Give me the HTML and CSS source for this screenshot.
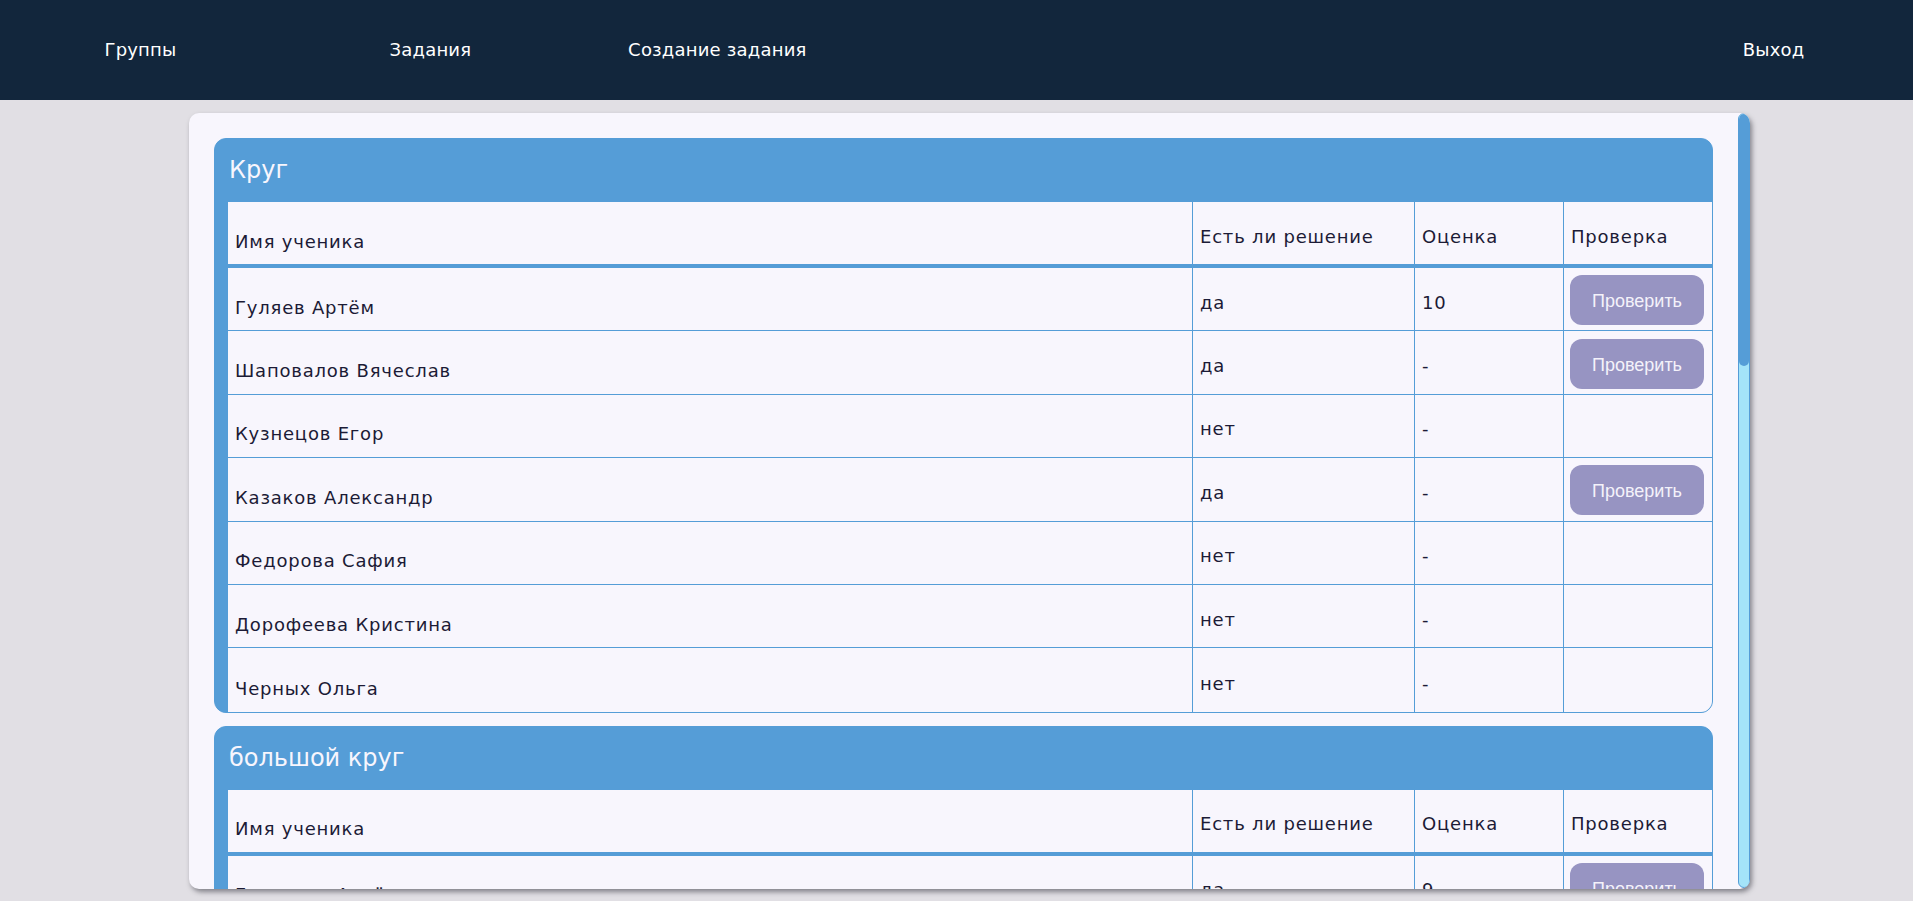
FILE: index.html
```html
<!DOCTYPE html>
<html lang="ru">
<head>
<meta charset="utf-8">
<title>Задания</title>
<link rel="stylesheet" href="styles.css">
</head>
<body>
<nav class="topnav">
  <a class="nav-link" href="#">Группы</a>
  <a class="nav-link" href="#">Задания</a>
  <a class="nav-link" href="#">Создание задания</a>
  <a class="nav-link nav-exit" href="#">Выход</a>
</nav>
<main class="card">
  <div class="card-body">
    <section class="group">
      <h2 class="group-title">Круг</h2>
      <table class="grid">
        <colgroup><col class="c-name"><col class="c-sol"><col class="c-mark"><col class="c-check"></colgroup>
        <thead>
          <tr class="head-row"><th class="name">Имя ученика</th><th>Есть ли решение</th><th>Оценка</th><th>Проверка</th></tr>
        </thead>
        <tbody>
          <tr><td class="name">Гуляев Артём</td><td>да</td><td>10</td><td class="act"><button class="btn">Проверить</button></td></tr>
          <tr><td class="name">Шаповалов Вячеслав</td><td>да</td><td>-</td><td class="act"><button class="btn">Проверить</button></td></tr>
          <tr><td class="name">Кузнецов Егор</td><td>нет</td><td>-</td><td class="act"></td></tr>
          <tr><td class="name">Казаков Александр</td><td>да</td><td>-</td><td class="act"><button class="btn">Проверить</button></td></tr>
          <tr><td class="name">Федорова Сафия</td><td>нет</td><td>-</td><td class="act"></td></tr>
          <tr><td class="name">Дорофеева Кристина</td><td>нет</td><td>-</td><td class="act"></td></tr>
          <tr><td class="name">Черных Ольга</td><td>нет</td><td>-</td><td class="act"></td></tr>
        </tbody>
      </table>
    </section>
    <section class="group">
      <h2 class="group-title">большой круг</h2>
      <table class="grid">
        <colgroup><col class="c-name"><col class="c-sol"><col class="c-mark"><col class="c-check"></colgroup>
        <thead>
          <tr class="head-row"><th class="name">Имя ученика</th><th>Есть ли решение</th><th>Оценка</th><th>Проверка</th></tr>
        </thead>
        <tbody>
          <tr><td class="name">Гаврилов Артём</td><td>да</td><td>9</td><td class="act"><button class="btn">Проверить</button></td></tr>
          <tr><td class="name">Шаповалов Вячеслав</td><td>да</td><td>-</td><td class="act"><button class="btn">Проверить</button></td></tr>
          <tr><td class="name">Кузнецов Егор</td><td>нет</td><td>-</td><td class="act"></td></tr>
        </tbody>
      </table>
    </section>
  </div>
  <div class="rail">
    <div class="rail-track">
      <div class="rail-thumb"></div>
    </div>
  </div>
</main>
</body>
</html>
```

FILE: styles.css
```css
* { box-sizing: border-box; }

html, body {
  margin: 0;
  padding: 0;
  height: 100%;
  overflow: hidden;
}

body {
  background: #e1dfe4;
  font-family: "DejaVu Sans", Verdana, sans-serif;
  color: #1c1b36;
}

.topnav {
  display: flex;
  height: 100px;
  background: #12263c;
}

.nav-link {
  width: 15%;
  text-align: center;
  line-height: 100px;
  font-size: 18px;
  letter-spacing: 0.2px;
  color: #ffffff;
  text-decoration: none;
}

.nav-link:first-child {
  padding-right: 6px;
}

.nav-exit {
  margin-left: auto;
  padding-left: 8px;
}

.card {
  display: flex;
  width: 1561px;
  height: 776px;
  margin: 13px 0 0 189px;
  background: #f8f6fd;
  border-radius: 10px;
  box-shadow: 2px 3px 5px rgba(40, 40, 50, 0.5);
  overflow: hidden;
}

.card-body {
  flex: 1;
  min-width: 0;
  padding: 25px 25px 0 25px;
  overflow: hidden;
}

.rail {
  flex: none;
  width: 12px;
  padding: 0 0 1px 0;
}

.rail-track {
  height: 100%;
  background: #a4e4f9;
  border: 1px solid #559dd7;
  border-radius: 6px;
  overflow: hidden;
}

.rail-thumb {
  height: 252px;
  background: #559dd7;
  border-radius: 5px;
}

.group {
  background: #559dd7;
  border: 1px solid #559dd7;
  border-radius: 12px;
  overflow: hidden;
  margin-bottom: 13px;
}

.group-title {
  margin: 0;
  height: 63px;
  line-height: 63px;
  padding-left: 14px;
  font-size: 24px;
  font-weight: normal;
  color: #f8f6fd;
}

.grid {
  margin-left: 13px;
  width: 1484px;
  table-layout: fixed;
  border-collapse: separate;
  border-spacing: 0;
  background: #f8f6fd;
  font-size: 18px;
  letter-spacing: 0.8px;
}

.c-name { width: 964px; }
.c-sol { width: 222px; }
.c-mark { width: 149px; }
.c-check { width: 149px; }

.grid th,
.grid td {
  text-align: left;
  font-weight: normal;
  vertical-align: middle;
  padding: 6px 7px 0 7px;
  border-left: 1px solid #559dd7;
  border-bottom: 1px solid #559dd7;
  white-space: nowrap;
}

.grid th {
  border-bottom: 4px solid #559dd7;
}

.grid .name {
  border-left: none;
  padding-top: 16px;
}

.head-row {
  height: 66px;
}

.grid tbody tr {
  height: 63.4px;
}

.grid tbody tr:last-child td {
  border-bottom: none;
}

.grid .act {
  padding: 2px 6px 0 6px;
}

.btn {
  display: block;
  width: 134px;
  height: 50px;
  padding: 3px 0 0 0;
  border: none;
  border-radius: 12px;
  background: #9794c2;
  color: #f4f2fa;
  font-family: "Liberation Sans", Arial, sans-serif;
  font-size: 18px;
  letter-spacing: 0;
  cursor: pointer;
}
```
